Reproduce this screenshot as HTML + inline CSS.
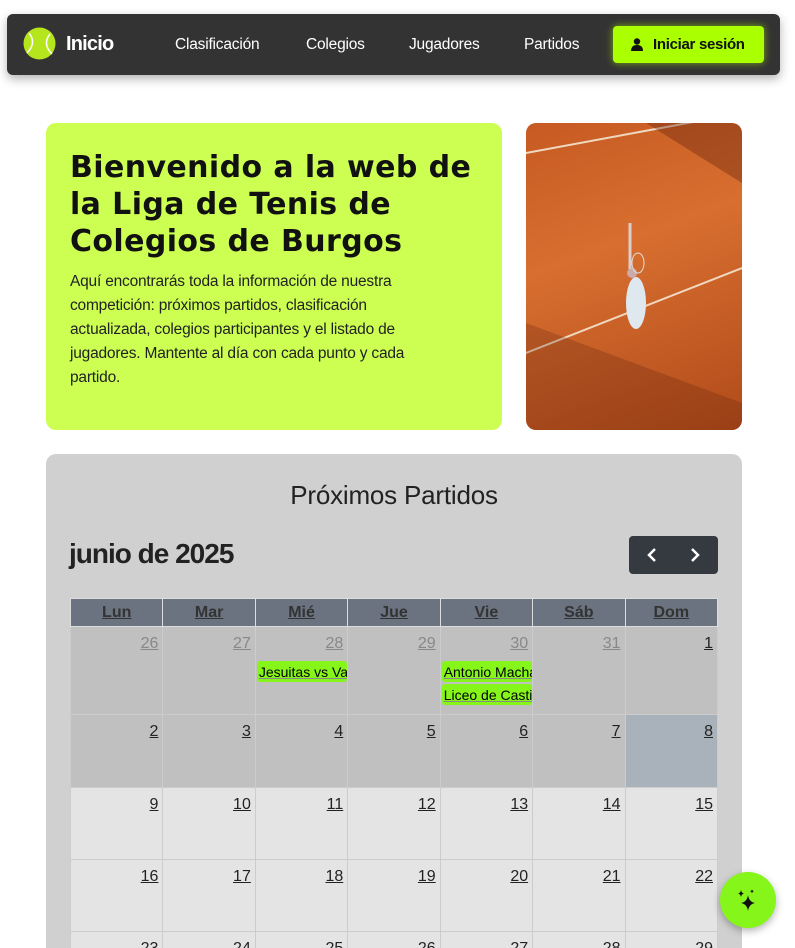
<!DOCTYPE html>
<html><head><meta charset="utf-8"><style>
*{box-sizing:border-box;margin:0;padding:0}
html,body{width:795px;height:948px;overflow:hidden}
body{background:#fff;font-family:"Liberation Sans",sans-serif;position:relative}
.nav{position:absolute;left:7px;top:14px;width:773px;height:61px;background:#333;border-radius:6px;box-shadow:0 4px 10px rgba(0,0,0,.3)}
.nav a{position:absolute;top:22px;color:#fff;font-size:15.5px;text-decoration:none;letter-spacing:-.2px}
.btn{position:absolute;left:606px;top:12px;width:151px;height:37px;background:#aaff00;border-radius:4px;box-shadow:0 0 8px rgba(170,255,0,.6);font-weight:bold;font-size:15px;color:#111;padding:10px 0 0 40px;letter-spacing:-.3px}
.hero{position:absolute;left:46px;top:123px;width:456px;height:307px;background:#ccff52;border-radius:10px;padding:26px 24px}
.hero h1{font-family:"DejaVu Sans",sans-serif;font-size:30px;line-height:37px;font-weight:bold;color:#111;letter-spacing:.4px}
.hero p{font-size:15.5px;line-height:24px;color:#222;margin-top:10px;letter-spacing:-.2px;width:365px}
.img{position:absolute;left:526px;top:123px;width:216px;height:307px;border-radius:10px;overflow:hidden;background:linear-gradient(160deg,#c65a22,#d86f30 40%,#b04a1a)}
.cal{position:absolute;left:46px;top:454px;width:696px;height:494px;background:#d0d0d0;border-radius:10px 10px 0 0;overflow:hidden}
.cal h2{position:absolute;top:26px;width:100%;text-align:center;font-weight:normal;font-size:26px;color:#222;letter-spacing:-.2px}
.mon{position:absolute;left:23px;top:84px;font-size:28px;font-weight:bold;color:#222;letter-spacing:-1px}
.arr{position:absolute;left:583px;top:82px;width:89px;height:38px;background:#343a40;border-radius:4px;color:#fff}
table{position:absolute;left:24px;top:144px;width:648px;border-collapse:collapse;table-layout:fixed}
th{background:#6b7280;color:#333;height:28px;font-size:16px;border:1px solid #ddd;text-decoration:underline}
td{border:1px solid #ccc;vertical-align:top;text-align:right;padding:8px 4px 0 0;font-size:16px;color:#222;text-decoration:underline}
.o{background:#c0c0c0}.o.g{color:#888}
.l td{background:#e4e4e4}
.ev{background:#85f51a;border-radius:3px;font-size:14px;text-align:left;padding:3px 2px;color:#000;text-decoration:none;white-space:nowrap;overflow:hidden;margin:8px -4px 0 1px;height:21px}
.fab{position:absolute;left:720px;top:872px;width:56px;height:56px;border-radius:50%;background:#85f51a;box-shadow:0 3px 8px rgba(0,0,0,.3)}
</style></head><body>
<div class="nav">
<svg style="position:absolute;left:16px;top:13px" width="33" height="33" viewBox="0 0 33 33"><circle cx="16.5" cy="16.5" r="16" fill="#b5e61d"/><path d="M6 6 Q14 16 4 26 M27 7 Q19 17 29 27" stroke="#fff" stroke-width="1.5" fill="none"/></svg>
<a style="left:59px;font-weight:bold;font-size:20px;top:19px;letter-spacing:-.8px">Inicio</a>
<a style="left:168px">Clasificación</a><a style="left:299px">Colegios</a><a style="left:402px">Jugadores</a><a style="left:517px">Partidos</a>
<div class="btn"><svg style="position:absolute;left:18px;top:12px" width="12" height="13" viewBox="0 0 12 13"><circle cx="6" cy="3.5" r="3.2" fill="#111"/><path d="M0 13 Q0 7 6 7 Q12 7 12 13Z" fill="#111"/></svg>Iniciar sesión</div>
</div>
<div class="hero"><h1>Bienvenido a la web de la Liga de Tenis de Colegios de Burgos</h1><p>Aquí encontrarás toda la información de nuestra competición: próximos partidos, clasificación actualizada, colegios participantes y el listado de jugadores. Mantente al día con cada punto y cada partido.</p></div>
<div class="img"><svg width="216" height="307"><path d="M0 30 L216 -10 M0 230 L216 145" stroke="#f0d8c0" stroke-width="2"/><path d="M120 0 L216 60 L216 0Z" fill="rgba(90,30,10,.35)"/><path d="M0 200 L216 280 L216 307 L0 307Z" fill="rgba(90,30,10,.25)"/><ellipse cx="110" cy="180" rx="10" ry="26" fill="#dfe8ef"/><circle cx="106" cy="150" r="5" fill="#caa"/><path d="M104 146 L104 100" stroke="#dcc" stroke-width="3"/><ellipse cx="112" cy="140" rx="6" ry="10" fill="none" stroke="#ddd"/></svg></div>
<div class="cal"><h2>Próximos Partidos</h2><div class="mon">junio de 2025</div>
<div class="arr"><svg width="89" height="38"><path d="M26 13 L20 19 L26 25 M63 13 L69 19 L63 25" stroke="#fff" stroke-width="2.5" fill="none"/></svg></div>
<table><tr><th>Lun</th><th>Mar</th><th>Mié</th><th>Jue</th><th>Vie</th><th>Sáb</th><th>Dom</th></tr>
<tr style="height:88px"><td class="o g">26</td><td class="o g">27</td><td class="o g">28<div class="ev">Jesuitas vs Va</div></td><td class="o g">29</td><td class="o g">30<div class="ev">Antonio Macha</div><div class="ev" style="margin-top:2px">Liceo de Casti</div></td><td class="o g">31</td><td class="o">1</td></tr>
<tr style="height:73px"><td class="o">2</td><td class="o">3</td><td class="o">4</td><td class="o">5</td><td class="o">6</td><td class="o">7</td><td style="background:#a9b1ba">8</td></tr>
<tr class="l" style="height:72px"><td>9</td><td>10</td><td>11</td><td>12</td><td>13</td><td>14</td><td>15</td></tr>
<tr class="l" style="height:72px"><td>16</td><td>17</td><td>18</td><td>19</td><td>20</td><td>21</td><td>22</td></tr>
<tr class="l" style="height:72px"><td>23</td><td>24</td><td>25</td><td>26</td><td>27</td><td>28</td><td>29</td></tr></table></div>
<div class="fab"><svg width="56" height="56" viewBox="0 0 56 56"><path d="M28 23 Q29 30 35 31 Q29 32 28 39 Q27 32 21 31 Q27 30 28 23Z M21 18 Q21.5 21 24 21.5 Q21.5 22 21 25 Q20.5 22 18 21.5 Q20.5 21 21 18Z M32 17 Q32.3 19 34 19.3 Q32.3 19.6 32 21.5 Q31.7 19.6 30 19.3 Q31.7 19 32 17Z" fill="#111"/></svg></div>
</body></html>
